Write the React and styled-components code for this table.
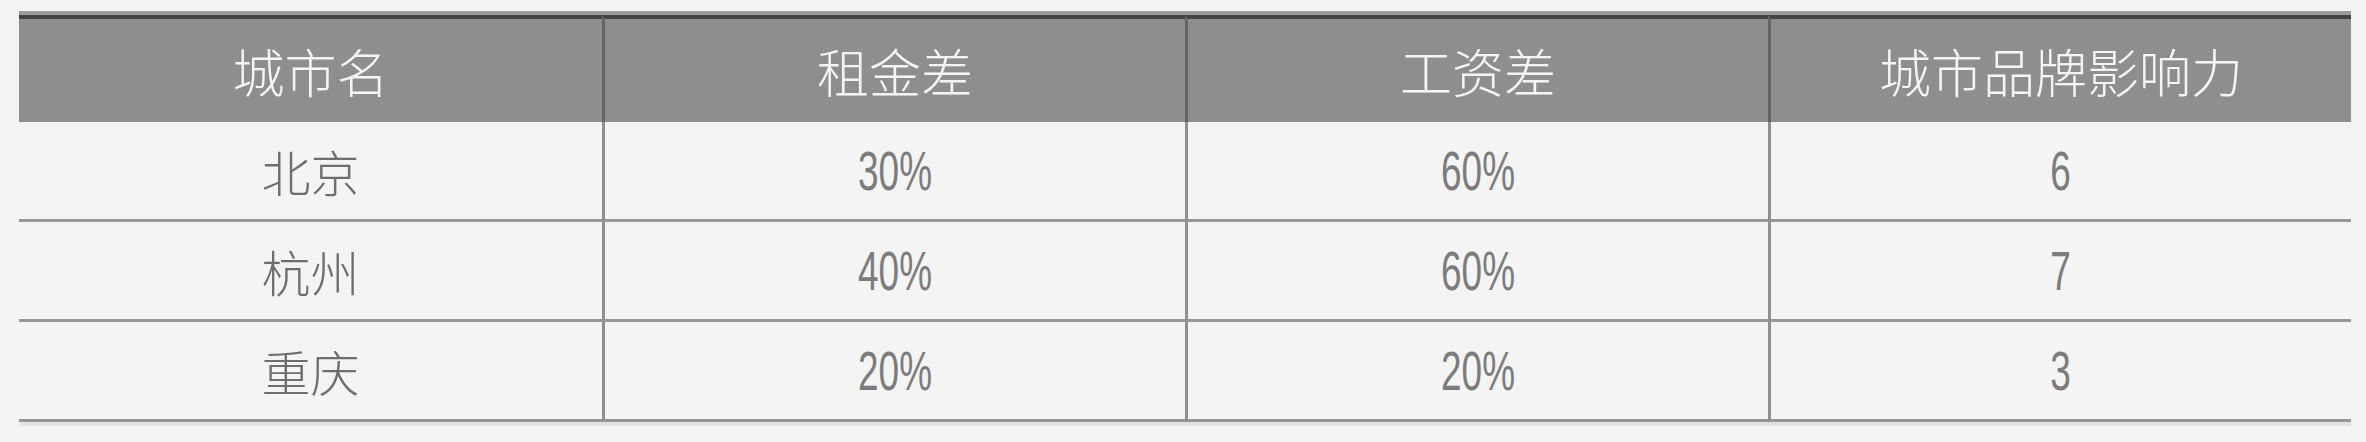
import React from 'react'
import styled, { createGlobalStyle } from 'styled-components'

const GlobalStyle = createGlobalStyle`
  html, body {
    margin: 0;
    padding: 0;
    background: #f4f4f4;
  }
`

const rows = [
  { city: '北京', rent: '30%', wage: '60%', brand: '6' },
  { city: '杭州', rent: '40%', wage: '60%', brand: '7' },
  { city: '重庆', rent: '20%', wage: '20%', brand: '3' },
]

function App() {
  return (
    <>
      <GlobalStyle />
      <Page>
        <Table>
          <thead>
            <tr>
              <Th>城市名</Th>
              <Th>租金差</Th>
              <Th>工资差</Th>
              <Th>城市品牌影响力</Th>
            </tr>
          </thead>
          <tbody>
            {rows.map(r => (
              <tr key={r.city}>
                <Td>{r.city}</Td>
                <Td><Num>{r.rent}</Num></Td>
                <Td><Num>{r.wage}</Num></Td>
                <Td><Num>{r.brand}</Num></Td>
              </tr>
            ))}
          </tbody>
        </Table>
      </Page>
    </>
  )
}

export default App

const Page = styled.div`
  width: 2366px;
  height: 442px;
  box-sizing: border-box;
  padding: 11px 15px 0 19px;
  font-family: "Noto Sans CJK SC", "Noto Sans", sans-serif;
`

const Table = styled.table`
  width: 2332px;
  border-collapse: separate;
  border-spacing: 0;
  table-layout: fixed;
  border-top: 4px solid #9b9b9b;
  border-bottom: 4px solid #e2e2e2;
`

const Th = styled.th`
  height: 107px;
  padding: 0;
  box-sizing: border-box;
  background: #8f8d8d;
  border-top: 4px solid #444343;
  border-left: 3px solid #666565;
  color: #f4f4f4;
  font-size: 52px;
  font-weight: 300;
  line-height: 1;
  text-align: center;
  vertical-align: middle;

  &:first-child {
    border-left: none;
  }
`

const Td = styled.td`
  height: 100px;
  padding: 0;
  box-sizing: border-box;
  border-bottom: 3px solid #979797;
  border-left: 3px solid #8f8f8f;
  color: #6e6e6e;
  font-size: 49px;
  font-weight: 300;
  line-height: 1;
  text-align: center;
  vertical-align: middle;

  &:first-child {
    border-left: none;
  }
`

const Num = styled.span`
  display: inline-block;
  font-family: "Liberation Sans", sans-serif;
  font-size: 56px;
  font-weight: 400;
  color: #7c7c7c;
  transform: scaleX(0.66);
`
